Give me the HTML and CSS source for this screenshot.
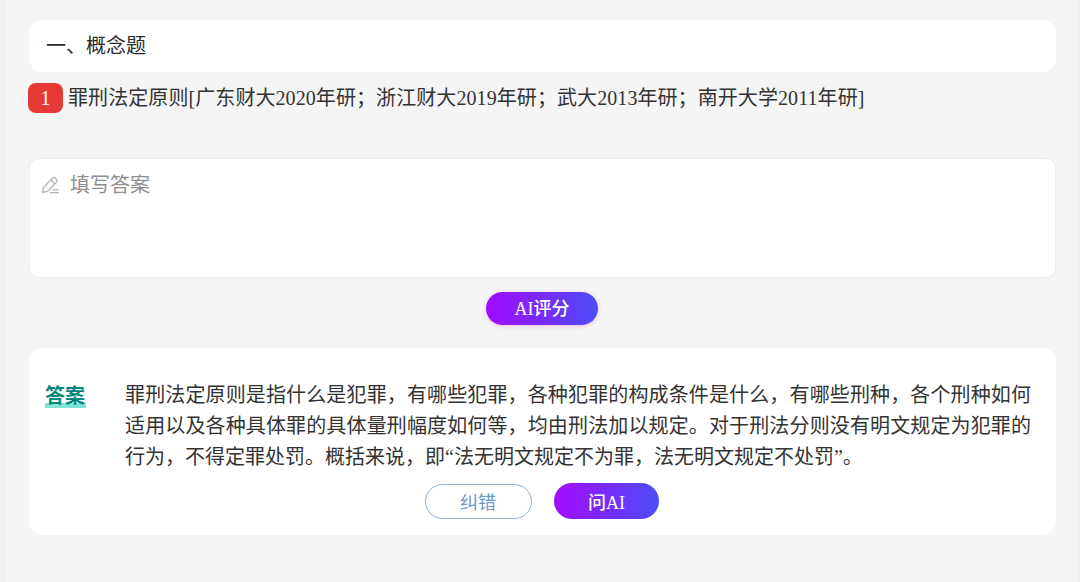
FILE: index.html
```html
<!DOCTYPE html>
<html lang="zh-CN">
<head>
<meta charset="utf-8">
<title>概念题</title>
<link rel="stylesheet" href="styles.css">
</head>
<body>
<main class="page">
  <div class="section-title">一、概念题</div>
  <div class="question">
    <span class="badge">1</span>
    <span class="question-text">罪刑法定原则[广东财大2020年研；浙江财大2019年研；武大2013年研；南开大学2011年研]</span>
  </div>
  <div class="input-card">
    <svg class="pen" width="20" height="20" viewBox="0 0 20 20" fill="none" stroke="#b4b4b4" stroke-width="1.3">
      <path d="M2.5 17.5 L3.5 12.5 L12.5 3 Q13.8 1.8 15.2 3 L16.6 4.4 Q17.8 5.8 16.6 7 L7.5 16.5 Z"/>
      <path d="M11 4.8 L14.9 8.8"/>
      <path d="M10 17.7 H19"/>
      <path d="M12.5 14.8 H19"/>
    </svg>
    <span class="placeholder">填写答案</span>
  </div>
  <div class="score-row">
    <button class="grad-btn score-btn">AI评分</button>
  </div>
  <section class="answer-card">
    <div class="answer-body">
      <span class="answer-label">答案</span>
      <p class="answer-text">罪刑法定原则是指什么是犯罪，有哪些犯罪，各种犯罪的构成条件是什么，有哪些刑种，各个刑种如何适用以及各种具体罪的具体量刑幅度如何等，均由刑法加以规定。对于刑法分则没有明文规定为犯罪的行为，不得定罪处罚。概括来说，即“法无明文规定不为罪，法无明文规定不处罚”。</p>
    </div>
    <div class="answer-actions">
      <button class="outline-btn">纠错</button>
      <button class="grad-btn ask-btn">问AI</button>
    </div>
  </section>
</main>
</body>
</html>
```

FILE: styles.css
```css
* { box-sizing: border-box; }
html, body { margin: 0; height: 582px; overflow: hidden; }
body {
  background: #f5f5f5;
  font-family: "Liberation Serif", "Noto Sans CJK SC", serif;
  color: #333;
  font-size: 20px;
}
.page {
  height: 582px;
  padding: 20px 22px 0 22px;
  border-left: 6px solid #f0f0f0;
  border-right: 2px solid #f0f0f0;
}
.section-title {
  height: 52px;
  margin-left: 1px;
  padding-left: 17px;
  background: #fff;
  border-radius: 14px;
  line-height: 53px;
  color: #2b2b2b;
}
.question {
  display: flex;
  align-items: center;
  gap: 5px;
  margin-top: 11px;
  height: 30px;
}
.badge {
  width: 35px;
  height: 30px;
  flex: none;
  background: #e53935;
  color: #fff;
  border-radius: 8px;
  text-align: center;
  line-height: 30px;
}
.question-text { white-space: nowrap; line-height: 30px; letter-spacing: .08px; }
.input-card {
  display: flex;
  align-items: flex-start;
  gap: 10px;
  height: 120px;
  margin: 45px 0 0 1px;
  padding: 14px 0 0 10px;
  background: #fff;
  border: 1px solid #ececec;
  border-radius: 10px;
}
.pen { margin-top: 2px; flex: none; }
.placeholder { color: #8f8f8f; line-height: 24px; }
.score-row { display: flex; justify-content: center; margin-top: 14px; }
.grad-btn {
  border: 0;
  color: #fff;
  font: inherit;
  font-size: 18px;
  font-weight: 500;
  padding: 0;
  background: linear-gradient(90deg, #a20bff 0%, #4d4cf5 100%);
  border-radius: 20px;
}
.score-btn {
  width: 112px;
  height: 33px;
  padding-bottom: 3px;
  box-shadow: 0 1px 4px rgba(230, 120, 170, .45);
}
.answer-card {
  height: 187px;
  margin: 23px 0 0 1px;
  padding: 32px 25px 0 16px;
  background: #fff;
  border-radius: 14px;
}
.answer-body { display: flex; }
.answer-label {
  flex: none;
  width: 80px;
  height: 24px;
  margin-top: 4px;
  color: #00877a;
  font-weight: 700;
  line-height: 24px;
  align-self: flex-start;
  background: linear-gradient(180deg, transparent 80%, #7fe3d8 80%) no-repeat 0 0 / 41px 100%;
}
.answer-text {
  margin: 0;
  flex: 1;
  line-height: 31px;
  color: #333;
  text-align: justify;
}
.answer-actions {
  display: flex;
  justify-content: center;
  align-items: center;
  gap: 22px;
  margin: 10px 0 0 7px;
}
.outline-btn {
  width: 107px;
  height: 35px;
  background: #fff;
  border: 1px solid #8fb2d0;
  border-radius: 18px;
  color: #6a9bc6;
  font: inherit;
  font-size: 18px;
  padding: 0;
}
.ask-btn { width: 105px; height: 36px; padding-left: 1px; }
```
